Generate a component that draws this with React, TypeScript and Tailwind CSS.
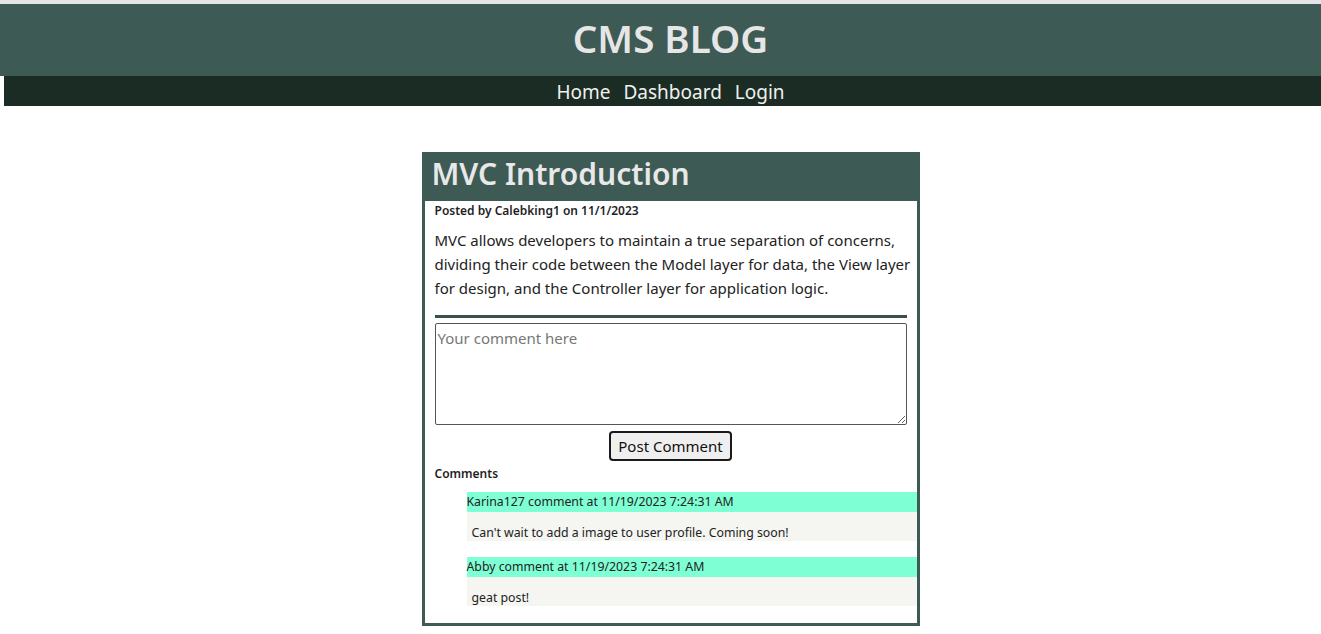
import React from "react";

const font = { fontFamily: '"Noto Sans", "Open Sans", sans-serif' };

export default function App() {
  const comments = [
    { user: "Karina127", date: "11/19/2023 7:24:31 AM", text: "Can't wait to add a image to user profile. Coming soon!" },
    { user: "Abby", date: "11/19/2023 7:24:31 AM", text: "geat post!" },
  ];
  return (
    <div className="min-h-screen bg-white text-[#1f1f1f]" style={font}>
      <div className="h-[4px] bg-[#e4e4e4]" />
      <header className="h-[72px] bg-[#3e5a54] flex items-center justify-center pl-[20px] pb-[3px]">
        <h1 className="text-[38.5px] font-semibold text-[#e6e6e6] leading-none">CMS BLOG</h1>
      </header>
      <nav className="ml-[4px] h-[30px] bg-[#1b2c24] flex items-center justify-center gap-[13px] pl-[16px] pt-[2px] text-[19px] text-[#f0f0f0] leading-none">
        <span>Home</span>
        <span>Dashboard</span>
        <span>Login</span>
      </nav>
      <main className="flex justify-center pl-[20px] pt-[46px]">
        <article className="w-[498px] border-[3px] border-[#3e5a54]">
          <div className="h-[46px] bg-[#3e5a54] flex items-start pt-[4px] pl-[7px]">
            <h2 className="text-[30px] font-semibold text-[#e8e8e8] leading-none">MVC Introduction</h2>
          </div>
          <p className="pl-[10px] pt-[2px] text-[12px] font-semibold leading-[16px]">Posted by Calebking1 on 11/1/2023</p>
          <p className="pl-[10px] pr-[2px] mt-[9px] text-[15px] leading-[24px] text-[#222]">
            MVC allows developers to maintain a true separation of concerns, dividing their code between the Model layer for data, the View layer for design, and the Controller layer for application logic.
          </p>
          <div className="px-[10px] mt-[15px]">
            <div className="h-[3px] bg-[#3a514b]" />
            <textarea
              placeholder="Your comment here"
              className="mt-[5px] block w-full h-[102px] border border-[#555] rounded-[2px] px-[2px] pt-[3px] text-[15px] placeholder:text-[#777] resize-y"
              style={font}
            />
            <div className="flex justify-center mt-[6px]">
              <button className="h-[30px] px-[7px] border-2 border-[#1a1a1a] rounded-[4px] bg-[#efefef] text-[15px] text-[#111]" style={font}>
                Post Comment
              </button>
            </div>
            <p className="mt-[5px] text-[12px] font-semibold leading-[16px]">Comments</p>
          </div>
          <div className="pl-[42px] mt-[10px] pb-[17px] flex flex-col gap-[16px]">
            {comments.map((c) => (
              <div key={c.user}>
                <div className="h-[20px] bg-[#7fffd4] flex items-center text-[12.3px] text-[#222]">
                  {c.user} comment at {c.date}
                </div>
                <div className="h-[29px] bg-[#f5f5f1] pt-[13px] pl-[5px] leading-[16px] text-[12.3px] text-[#222]">{c.text}</div>
              </div>
            ))}
          </div>
        </article>
      </main>
    </div>
  );
}
